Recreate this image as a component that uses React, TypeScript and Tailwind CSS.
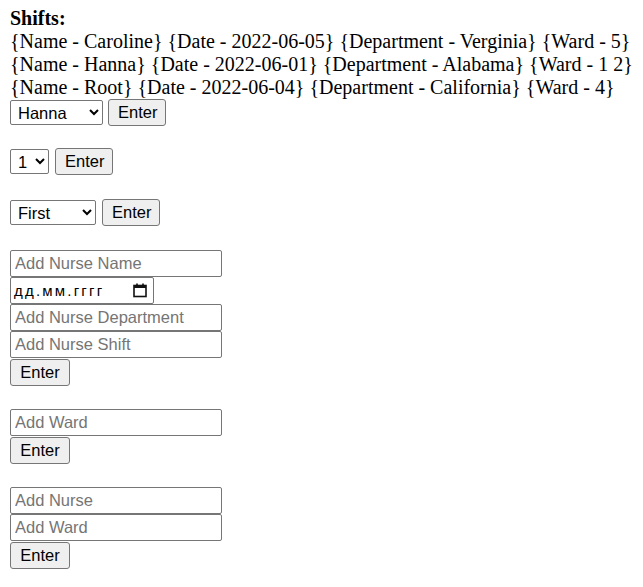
import React from 'react';

const shifts = [
  { name: 'Caroline', date: '2022-06-05', department: 'Verginia', ward: '5' },
  { name: 'Hanna', date: '2022-06-01', department: 'Alabama', ward: '1 2' },
  { name: 'Root', date: '2022-06-04', department: 'California', ward: '4' },
];

const btn =
  'h-[27px] rounded-[3px] border border-[#767676] bg-[#efefef] px-[9px] text-[16.5px] leading-none text-black';
const sel =
  'h-[25px] rounded-[2px] border border-[#767676] bg-white pl-[3px] text-[16.5px] leading-none text-black';
const field =
  'block h-[27px] w-[212px] rounded-[2px] border border-[#767676] bg-white px-[4px] text-[16.5px] text-black placeholder:text-[#757575] outline-none';

function CalendarIcon() {
  return (
    <svg width="14" height="15" viewBox="0 0 14 15" fill="none">
      <rect x="1" y="2.5" width="12" height="11" stroke="#111" strokeWidth="1.6" />
      <rect x="1" y="2.5" width="12" height="2.5" fill="#111" />
      <rect x="3.2" y="0.5" width="1.6" height="3" fill="#111" />
      <rect x="9.2" y="0.5" width="1.6" height="3" fill="#111" />
    </svg>
  );
}

export default function App() {
  return (
    <main className="pl-[10px] pt-[7px] font-['Liberation_Serif',serif] text-[20px] leading-[23px] text-black">
      <div className="font-bold">Shifts:</div>
      {shifts.map((s, i) => (
        <div key={i} className="whitespace-pre">
          <span>{`{Name - ${s.name}}`}</span>{' '}
          <span>{`{Date - ${s.date}}`}</span>{' '}
          <span>{`{Department - ${s.department}}`}</span>{' '}
          <span>{`{Ward - ${s.ward}}`}</span>
        </div>
      ))}

      <div className="font-['Liberation_Sans',Arial,sans-serif]">
        <div className="flex items-center gap-[5px]">
          <select className={`${sel} w-[93px]`} defaultValue="Hanna">
            <option>Hanna</option>
            <option>Caroline</option>
            <option>Root</option>
          </select>
          <button className={`${btn} w-[58px]`}>Enter</button>
        </div>

        <div className="mt-[22px] flex items-center gap-[6px]">
          <select className={`${sel} w-[39px]`} defaultValue="1">
            <option>1</option>
            <option>2</option>
          </select>
          <button className={`${btn} w-[58px]`}>Enter</button>
        </div>

        <div className="mt-[24px] flex items-center gap-[6px]">
          <select className={`${sel} w-[86px]`} defaultValue="First">
            <option>First</option>
            <option>Second</option>
          </select>
          <button className={`${btn} w-[58px]`}>Enter</button>
        </div>

        <div className="mt-[24px]">
          <input className={field} placeholder="Add Nurse Name" />
          <div className="flex h-[27px] w-[144px] items-center justify-between rounded-[2px] border border-[#767676] bg-white pl-[3px] pr-[6px]">
            <span className="font-['Liberation_Sans',Arial,sans-serif] text-[15px] tracking-[2.2px]">дд.мм.гггг</span>
            <CalendarIcon />
          </div>
          <input className={field} placeholder="Add Nurse Department" />
          <input className={field} placeholder="Add Nurse Shift" />
          <button className={`${btn} mt-[1px] w-[60px]`}>Enter</button>
        </div>

        <div className="mt-[23px]">
          <input className={field} placeholder="Add Ward" />
          <button className={`${btn} mt-[1px] w-[60px]`}>Enter</button>
        </div>

        <div className="mt-[23px]">
          <input className={field} placeholder="Add Nurse" />
          <input className={field} placeholder="Add Ward" />
          <button className={`${btn} mt-[1px] w-[60px]`}>Enter</button>
        </div>
      </div>
    </main>
  );
}
